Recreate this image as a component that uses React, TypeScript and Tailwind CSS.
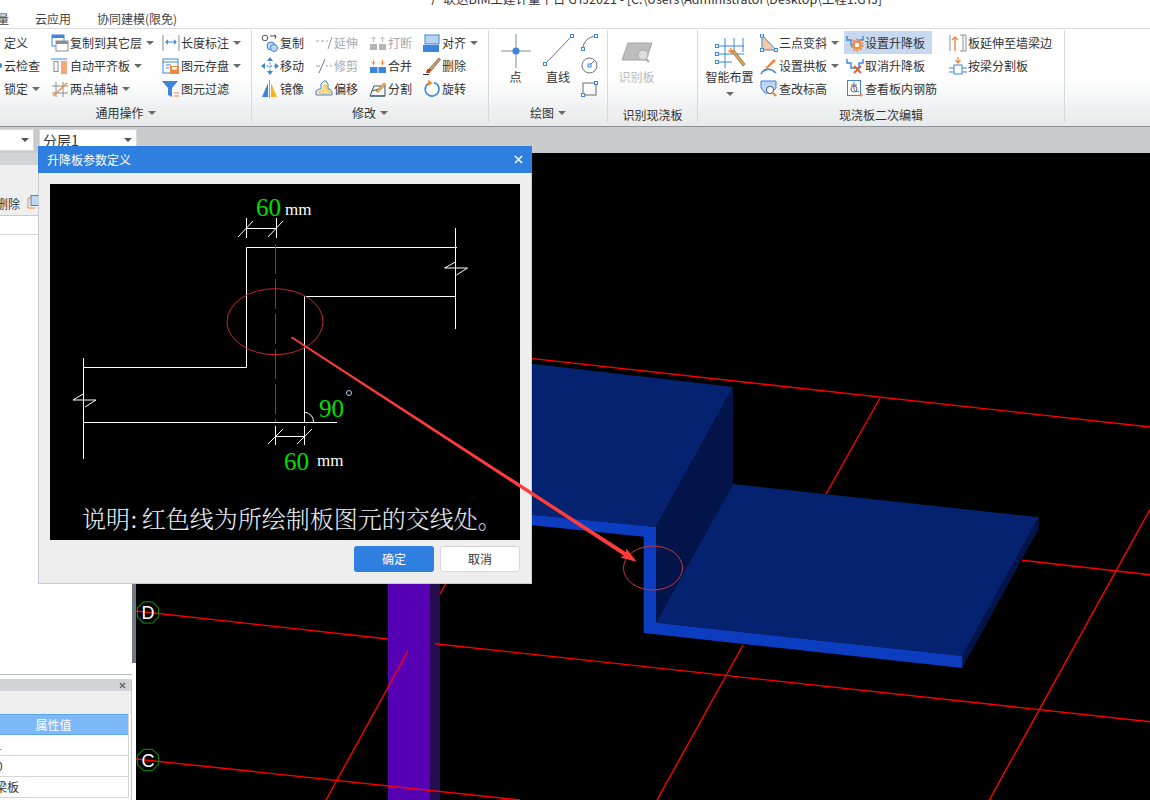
import React from "react";

const UI = "font-['Noto_Sans_CJK_SC','Liberation_Sans',sans-serif]";
const B = "#3d85d8";
const O = "#f0883e";
const G = "#8a8f96";

function Caret() {
  return <span className="ml-[4px] inline-block h-0 w-0 border-x-[4px] border-t-[4px] border-x-transparent border-t-[#6a6a6a]" />;
}

function Ic({ children, w = 18, h = 18, vb }: { children: React.ReactNode; w?: number; h?: number; vb?: string }) {
  return (
    <svg width={w} height={h} viewBox={vb ?? `0 0 ${w} ${h}`} fill="none" className="shrink-0">
      {children}
    </svg>
  );
}

function Item({
  icon,
  label,
  caret,
  off,
  active,
  w,
}: {
  icon?: React.ReactNode;
  label: string;
  caret?: boolean;
  off?: boolean;
  active?: boolean;
  w?: string;
}) {
  return (
    <div
      className={`flex h-[23px] items-center whitespace-nowrap ${off ? "text-[#a9a9a9]" : "text-[#333]"} ${active ? "bg-[#c7d8ef]" : ""} ${w ?? ""}`}
    >
      {icon ? <span className="mr-px flex w-[18px] shrink-0 items-center justify-center">{icon}</span> : null}
      <span>{label}</span>
      {caret ? <Caret /> : null}
    </div>
  );
}

function Group({ w, label, caret, children, tight }: { w: string; label: string; caret?: boolean; children: React.ReactNode; tight?: boolean }) {
  return (
    <div className={`flex h-[92px] shrink-0 flex-col border-r border-[#d6d8da] ${w}`}>
      <div className="flex h-[73px] pt-[1px]">{children}</div>
      <div className={`flex flex-1 items-center justify-center text-[#333] ${tight ? "pt-[4px]" : "pt-[1px]"}`}>
        <span>{label}</span>
        {caret ? <Caret /> : null}
      </div>
    </div>
  );
}

const icons = {
  copyLayer: (
    <Ic>
      <rect x="1" y="1" width="12" height="11" fill="#fff" stroke={B} />
      <rect x="1" y="1" width="12" height="3" fill={B} />
      <rect x="5" y="7" width="12" height="10" fill="#fff" stroke={G} />
      <rect x="5" y="7" width="12" height="3" fill={G} />
    </Ic>
  ),
  autoAlign: (
    <Ic>
      <path d="M0 2h16" stroke={B} />
      <rect x="3" y="4.5" width="4" height="10" stroke={G} />
      <rect x="10" y="4" width="6" height="13" fill="#f7a677" />
    </Ic>
  ),
  twoPoint: (
    <Ic>
      <path d="M5 2v15M12 2v15M1 6h16M1 13h16" stroke={G} />
      <path d="M2 16 16 3" stroke={O} strokeWidth="1.2" />
    </Ic>
  ),
  lenDim: (
    <Ic>
      <path d="M1 1v16M17 1v16" stroke={G} />
      <path d="M4 8h10M6 6 4 8l2 2M12 6l2 2-2 2" stroke={B} strokeWidth="1.2" />
    </Ic>
  ),
  save: (
    <Ic>
      <rect x="1" y="2" width="15" height="14" fill="#fff" stroke={B} />
      <path d="M1 5h15M4 8h5M4 11h3" stroke={B} />
      <rect x="8" y="9" width="9" height="8" fill={O} />
      <rect x="10" y="10" width="5" height="2.5" fill="#fff" />
    </Ic>
  ),
  filter: (
    <Ic>
      <path d="M0 1h16l-6 7v9l-4-2V8z" fill={B} />
      <path d="M12 13h5M12 16h5" stroke={O} />
    </Ic>
  ),
  copy: (
    <Ic>
      <circle cx="4" cy="4" r="2.8" stroke="#555" />
      <path d="M9 2h6l-1 3M13 1l2 1" stroke="#555" />
      <circle cx="10" cy="12" r="4" fill="#bcd8f5" stroke={B} />
      <circle cx="13" cy="14" r="3.5" fill="#bcd8f5" stroke={B} />
    </Ic>
  ),
  extend: (
    <Ic>
      <path d="M1 7h3M6 7h3M11 7h2" stroke="#aaa" />
      <path d="M13 15 17 3" stroke="#999" />
    </Ic>
  ),
  move: (
    <Ic>
      <path d="M9 2v14M2 9h14" stroke={B} strokeDasharray="2 1.5" />
      <path d="m9 0 3 4H6zM9 18l3-4H6zM0 9l4-3v6zM18 9l-4-3v6z" fill={B} />
    </Ic>
  ),
  trim: (
    <Ic>
      <path d="M1 9h4M11 9h2M15 9h2" stroke="#999" />
      <path d="M4 16 10 2" stroke="#777" />
    </Ic>
  ),
  breakI: (
    <Ic>
      <rect x="1" y="10" width="7" height="6" fill="#b5b5b5" />
      <rect x="10" y="10" width="7" height="6" fill="#b5b5b5" />
      <path d="M4.5 8V3M2.5 5l2-2 2 2M13.5 8V3M11.5 5l2-2 2 2" stroke="#b5b5b5" />
    </Ic>
  ),
  merge: (
    <Ic>
      <rect x="1" y="10" width="7.5" height="6" fill={B} />
      <rect x="9.5" y="10" width="7.5" height="6" fill={B} />
      <path d="M4.5 8V3M2.5 5l2 2 2-2M13.5 8V3M11.5 5l2 2 2-2" stroke={O} />
    </Ic>
  ),
  align: (
    <Ic>
      <rect x="2" y="1" width="14" height="9" fill="#b7d2f2" stroke={B} />
      <rect x="0" y="11" width="16" height="7" fill={B} />
    </Ic>
  ),
  del: (
    <Ic>
      <path d="M6 12 16 1l1.5 1.5L8 14z" fill="#c9a067" stroke="#6a4a28" strokeWidth=".7" />
      <path d="M4 12.5c1-1 3-1 4 .5l-1 3H3z" fill="#c2481f" />
      <path d="M0 17.5h6" stroke="#333" />
    </Ic>
  ),
  mirror: (
    <Ic>
      <path d="M7 3v14H1z" fill={B} />
      <path d="M10 3v14h6z" fill="#f6b416" />
      <path d="M8.5 0v18" stroke="#999" />
    </Ic>
  ),
  offset: (
    <Ic>
      <path d="M1 15v-4l3-2h2V4l3-3h2l2 3v5h2l2 3v3z" fill="#fdeec4" stroke={B} />
      <path d="M4 13v-1l2-1h3V5h2v6h3l1 2z" fill="#fff" stroke="#f6b416" />
    </Ic>
  ),
  split: (
    <Ic>
      <path d="M1 16 5 6h11v10z" stroke="#34506f" />
      <path d="M1 16h15M3 11l10-3" stroke="#34506f" />
      <path d="m7 11 8-8 2 1.5-8 8z" fill="#e8b25c" stroke="#7b5a2c" strokeWidth=".5" />
    </Ic>
  ),
  rotate: (
    <Ic>
      <path d="M11 2.4A7 7 0 1 1 5 3.5" stroke={B} strokeWidth="1.6" />
      <path d="M5 0v6l5-3z" fill={O} />
    </Ic>
  ),
  threePt: (
    <Ic>
      <path d="M2 1v15h14z" fill="#f8c7a4" stroke={B} />
      <rect x="0.5" y="0" width="3" height="3" fill="#fff" stroke={B} />
      <rect x="0.5" y="14.5" width="3" height="3" fill="#fff" stroke={B} />
      <rect x="14.5" y="14.5" width="3" height="3" fill="#fff" stroke={B} />
    </Ic>
  ),
  arch: (
    <Ic>
      <path d="M1 17c2-5 9-7 15-1" stroke={B} strokeWidth="1.6" />
      <path d="m5 11 9-9 2 2-9 8z" fill={O} />
    </Ic>
  ),
  elev: (
    <Ic>
      <path d="M1 1h15v7l-5 5H5L1 8z" fill="#bcd8f5" stroke={B} />
      <circle cx="10" cy="10" r="3.6" fill="#fff" stroke="#456" />
      <path d="m13 13 3 3" stroke={O} strokeWidth="2.4" />
    </Ic>
  ),
  setDrop: (
    <Ic>
      <path d="M1 2v4h4v5h8V6h4V2" stroke={B} strokeWidth="1.4" />
      <circle cx="11" cy="11" r="5.6" stroke={O} strokeWidth="1.6" strokeDasharray="2 1.5" />
      <circle cx="11" cy="11" r="3.4" fill="#fff" stroke={O} strokeWidth="2.2" />
    </Ic>
  ),
  cancelDrop: (
    <Ic>
      <path d="M1 2v4h4v5h8V6h4V2" stroke={B} strokeWidth="1.4" />
      <path d="m8 9 7 7M15 9l-7 7" stroke="#e2603b" strokeWidth="2" />
    </Ic>
  ),
  rebar: (
    <Ic>
      <rect x="1.5" y="0.5" width="13" height="15" fill="#fff" stroke={B} />
      <path d="M8 2v7a3 3 0 0 0 5 2M5 5h6" stroke="#667" />
      <circle cx="8" cy="9" r="3" stroke="#667" />
      <path d="m15 13 2 2-2 2-2-2z" fill={O} />
    </Ic>
  ),
  boardExt: (
    <Ic>
      <path d="M11 1h6v16h-6M14 1v16" stroke={G} />
      <path d="M6 17V3M3 6l3-3 3 3" stroke={O} strokeWidth="1.4" />
      <path d="M1 1v16" stroke={G} />
    </Ic>
  ),
  splitBeam: (
    <Ic>
      <path d="M9 0v5M6.5 3 9 6l2.5-3" stroke={O} strokeWidth="1.3" />
      <rect x="5" y="8" width="8" height="9" stroke={B} />
      <path d="M0 11h5M13 11h5M0 15h5M13 15h5" stroke={B} />
    </Ic>
  ),
};

function Sq({ x, y }: { x: number; y: number }) {
  return <rect x={x - 1.5} y={y - 1.5} width="3" height="3" fill="#fff" stroke={B} />;
}

function Ribbon() {
  return (
    <div className="flex h-[98px] items-start overflow-hidden border-t border-[#dcdcdc] bg-linear-to-b from-white via-white via-50% to-[#e7e9ea] pt-[1px]">
      <Group w="w-[252px]" label="通用操作" caret>
        <div className="w-[51px] pl-[4px]">
          <Item label="定义" />
          <div className="flex h-[23px] items-center whitespace-nowrap text-[#333]">
            <span className="-ml-[4px] mr-[2px] h-[5px] w-[2px] rounded-r-full bg-[#3d85d8]" />
            <span>云检查</span>
          </div>
          <Item label="锁定" caret />
        </div>
        <div className="w-[111px]">
          <Item icon={icons.copyLayer} label="复制到其它层" caret />
          <Item icon={icons.autoAlign} label="自动平齐板" caret />
          <Item icon={icons.twoPoint} label="两点辅轴" caret />
        </div>
        <div>
          <Item icon={icons.lenDim} label="长度标注" caret />
          <Item icon={icons.save} label="图元存盘" caret />
          <Item icon={icons.filter} label="图元过滤" />
        </div>
      </Group>
      <Group w="w-[237px]" label="修改" caret>
        <div className="w-[63px] pl-[9px]">
          <Item icon={icons.copy} label="复制" />
          <Item icon={icons.move} label="移动" />
          <Item icon={icons.mirror} label="镜像" />
        </div>
        <div className="w-[54px]">
          <Item icon={icons.extend} label="延伸" off />
          <Item icon={icons.trim} label="修剪" off />
          <Item icon={icons.offset} label="偏移" />
        </div>
        <div className="w-[54px]">
          <Item icon={icons.breakI} label="打断" off />
          <Item icon={icons.merge} label="合并" />
          <Item icon={icons.split} label="分割" />
        </div>
        <div>
          <Item icon={icons.align} label="对齐" caret />
          <Item icon={icons.del} label="删除" />
          <Item icon={icons.rotate} label="旋转" />
        </div>
      </Group>
      <Group w="w-[119px]" label="绘图" caret>
        <div className="flex w-[50px] flex-col items-center pl-[3px] text-[#333]">
          <svg width="32" height="36" viewBox="0 0 32 36" fill="none" className="mt-[1px]">
            <path d="M16 2v34M1 19h30" stroke="#7f8a99" />
            <circle cx="16" cy="19" r="3.6" fill={B} />
          </svg>
          <span className="mt-[3px]">点</span>
        </div>
        <div className="flex w-[38px] flex-col items-center text-[#333]">
          <svg width="32" height="36" viewBox="0 0 32 36" fill="none" className="mt-[1px]">
            <path d="M3 32 30 4" stroke="#66707d" />
            <Sq x={3} y={32} />
            <Sq x={30} y={4} />
          </svg>
          <span className="mt-[3px]">直线</span>
        </div>
        <div className="flex w-[24px] flex-col items-center gap-[6px] pt-[3px]">
          <Ic w={17} h={17}>
            <path d="M2 15C2 8 7 3 15 2" stroke="#66707d" />
            <Sq x={2} y={15} />
            <Sq x={15} y={2} />
          </Ic>
          <Ic w={17} h={17}>
            <circle cx="8.5" cy="8.5" r="7.5" stroke="#66707d" />
            <path d="M8.5 8.5 13 4" stroke="#66707d" />
            <Sq x={8.5} y={8.5} />
          </Ic>
          <Ic w={17} h={17}>
            <rect x="2" y="3" width="13" height="12" stroke="#66707d" />
            <Sq x={15} y={3} />
            <Sq x={2} y={15} />
          </Ic>
        </div>
      </Group>
      <Group w="w-[90px]" label="识别现浇板" tight>
        <div className="flex w-full flex-col items-center pr-[32px] pt-[11px] text-[#bbbbbb]">
          <svg width="32" height="22" viewBox="0 0 32 22" fill="none">
            <path d="M7 1h24l-6 17H1z" fill="#bdbdbd" stroke="#a5a5a5" />
            <circle cx="22" cy="13" r="5" fill="#ddd" stroke="#aaa" />
            <path d="m25 17 3 3" stroke="#aaa" strokeWidth="2" />
          </svg>
          <span className="mt-[7px]">识别板</span>
        </div>
      </Group>
      <Group w="w-[367px]" label="现浇板二次编辑" tight>
        <div className="flex w-[62px] flex-col items-center pl-[1px] pt-[5px] text-[#333]">
          <svg width="32" height="34" viewBox="0 0 32 34" fill="none">
            <path d="M2 10h28M2 18h28M2 26h16M11 2v30M20 2v14M29 2v14" stroke={B} />
            <Sq x={3} y={10} />
            <Sq x={3} y={18} />
            <Sq x={3} y={26} />
            <path d="m18 16 11 14 2-2-11-14z" fill="#d9a35b" stroke="#8a5a2e" strokeWidth=".7" />
            <path d="M16 11l2 3 3 1-3 1-1 3-1-3-3-1 3-1z" fill={O} />
          </svg>
          <span className="mt-[1px]">智能布置</span>
          <span className="mt-[9px] inline-block h-0 w-0 border-x-[4px] border-t-[4px] border-x-transparent border-t-[#6a6a6a]" />
        </div>
        <div className="w-[84px]">
          <Item icon={icons.threePt} label="三点变斜" caret />
          <Item icon={icons.arch} label="设置拱板" caret />
          <Item icon={icons.elev} label="查改标高" />
        </div>
        <div className="w-[105px]">
          <Item icon={icons.setDrop} label="设置升降板" active w="w-[88px] pl-[2px]" />
          <Item icon={icons.cancelDrop} label="取消升降板" w="pl-[2px]" />
          <Item icon={icons.rebar} label="查看板内钢筋" w="pl-[2px]" />
        </div>
        <div>
          <Item icon={icons.boardExt} label="板延伸至墙梁边" />
          <Item icon={icons.splitBeam} label="按梁分割板" />
        </div>
      </Group>
    </div>
  );
}

function Select({ w, text }: { w: string; text?: string }) {
  return (
    <div className={`flex h-[22px] items-center justify-between border border-[#dadada] bg-white pl-[3px] pr-[4px] text-[14px] leading-none text-[#333] ${w}`}>
      <span>{text}</span>
      <span className="inline-block h-0 w-0 border-x-[4px] border-t-[4px] border-x-transparent border-t-[#555]" />
    </div>
  );
}

function LeftPanel() {
  return (
    <div className="flex w-[136px] shrink-0 flex-col bg-white">
      <div className="flex h-[522px] shrink-0">
        <div className="flex w-[132px] flex-col border-b border-[#b9babd]">
          <div className="h-[12px] bg-[#d1d3d7]" />
          <div className="flex h-[51px] items-end border-b border-[#c9cbcf] bg-[#efefef] pb-[5px] text-[#333]">
            <span className="-ml-[4px]">删除</span>
            <svg width="12" height="15" viewBox="0 0 12 15" fill="none" className="ml-[7px]">
              <path d="M4 3H1v10h7" stroke={O} />
              <rect x="4" y="0.5" width="8" height="10" fill="#bcd8f5" stroke={B} />
            </svg>
          </div>
          <div className="h-[19px] border-b border-[#d5d5d5]" />
          <div className="flex-1" />
        </div>
        <div className="flex w-[4px] flex-col">
          <div className="h-[510px] bg-[#6f7883]" />
        </div>
      </div>
      <div className="mt-[4px] flex w-[132px] flex-1 flex-col overflow-hidden border-r border-[#c4c5c8]">
        <div className="flex h-[12px] shrink-0 items-center justify-end bg-[#d2d3d8] pr-[5px] text-[10px] leading-none text-[#666]">
          <svg width="7" height="7" viewBox="0 0 7 7" fill="none">
            <path d="m1 1 5 5M6 1 1 6" stroke="#666" strokeWidth="1.4" />
          </svg>
        </div>
        <div className="h-[23px] shrink-0 bg-[#efefef]" />
        <div className="mr-[2px] flex flex-col border-r border-[#d5d5d5]">
          <div className="flex h-[21px] items-center justify-center border-y border-[#5ea5ee] bg-[#7db9f8] pr-[21px] text-white">
            <span>属性值</span>
          </div>
          <div className="flex h-[21px] items-center border-b border-[#d5d5d5] text-[#1e88e5]">
            <span className="-ml-[5px]">1</span>
          </div>
          <div className="flex h-[21px] items-center border-b border-[#d5d5d5] text-[#333]">
            <span className="-ml-[4px]">0</span>
          </div>
          <div className="flex h-[21px] items-center border-b border-[#d5d5d5] text-[#333]">
            <span className="-ml-[5px]">梁板</span>
          </div>
        </div>
      </div>
    </div>
  );
}

function Octagon({ x, y, t }: { x: number; y: number; t: string }) {
  const pts = Array.from({ length: 8 })
    .map((_, i) => {
      const a = (Math.PI / 4) * i + Math.PI / 8;
      return `${x + 11.5 * Math.cos(a)},${y + 11.5 * Math.sin(a)}`;
    })
    .join(" ");
  return (
    <g>
      <polygon points={pts} stroke="#0a7a0a" strokeWidth="1.2" fill="none" />
      <text x={x} y={y + 6.5} textAnchor="middle" fontSize="18" fill="#fff" fontFamily="Liberation Sans, sans-serif">
        {t}
      </text>
    </g>
  );
}

function Canvas() {
  const R = "#ff0000";
  const line = (x1: number, y1: number, x2: number, y2: number, k: string) => (
    <line key={k} x1={x1} y1={y1} x2={x2} y2={y2} stroke={R} strokeWidth="1.4" />
  );
  return (
    <div className="relative flex-1 bg-black">
      <svg className="absolute inset-0 h-full w-full" viewBox="136 153 1014 647" fill="none">
        <rect x="388" y="584" width="42" height="216" fill="#5600b4" />
        <rect x="430" y="584" width="10" height="216" fill="#260c50" />
        {line(500, 355, 1150, 427, "a")}
        {line(880, 398, 826, 494, "b")}
        {line(743, 645, 657, 800, "c")}
        {line(136, 611, 388, 639, "d1")}
        {line(435, 643.7, 1150, 721.7, "d2")}
        {line(1022, 560.3, 1150, 574.7, "e")}
        {line(1150, 509.3, 989.3, 800, "f")}
        {line(445.7, 584, 440, 594, "g")}
        {line(408, 651, 326, 800, "h")}
        {line(136, 759, 520, 800, "i")}
        <polygon points="500,360 733,387 656,527 500,512" fill="#04226f" />
        <polygon points="733,387 733,484 656,622.7 656,527" fill="#02144a" />
        <polygon points="733,484 1038.7,517.3 962.3,656 656,622.7" fill="#04226f" />
        <polygon points="1038.7,517.3 1038.7,528.7 962.3,668 962.3,656" fill="#02144a" />
        <polygon points="500,511.8 656,527 656,622.7 962.3,656 962.3,668 643.7,633 643.7,536.7 500,521.8" fill="#0c3cbf" />
        <ellipse cx="653" cy="568" rx="29.5" ry="22" stroke="#c8353f" strokeWidth="1" />
        <Octagon x={148} y={612.5} t="D" />
        <Octagon x={148} y={760} t="C" />
      </svg>
    </div>
  );
}

function Diagram() {
  const W = "#ffffff";
  const serif = "Liberation Serif, serif";
  return (
    <svg className="h-[356px] w-[470px] bg-black" viewBox="50 184 470 356" fill="none">
      <g stroke={W} strokeWidth="1">
        <path d="M246.5 218v20M276.5 218v20M246.5 228.5h30M238 237l15-16M268 237l15-16" />
        <path d="M246.5 247.5H457M246.5 247.5V367.5H83.5M455.5 228v101M455.5 262l-11 6h23l-11 7" />
        <path d="M304.5 296.5H455.5M304.5 296.5V422.5M83.5 358v101M83.5 422.5H337M83 394l-10 6h23l-11 7" />
        <path d="M275.5 426v19M304.5 426v19M275.5 436.5h29M268 444l15-15M297 444l15-15M304.5 412q9 2 9 10" />
      </g>
      <path d="M275.5 244V422" stroke="#d01818" strokeDasharray="30 5" />
      <ellipse cx="275" cy="321.7" rx="48" ry="33" stroke="#c02a30" />
      <text x="256" y="216" fontSize="25" fill="#00e000" fontFamily={serif}>60</text>
      <text x="285" y="215" fontSize="17" fill={W} fontWeight="300" fontFamily={serif}>mm</text>
      <text x="319" y="417" fontSize="25" fill="#00e000" fontFamily={serif}>90</text>
      <circle cx="349" cy="393" r="2.5" stroke="#a9d4f5" />
      <text x="284" y="470" fontSize="25" fill="#00e000" fontFamily={serif}>60</text>
      <text x="317" y="466" fontSize="17" fill={W} fontWeight="300" fontFamily={serif}>mm</text>
      <text x="82" y="528" fontSize="24" fill="#e8eef5" fontWeight="300" fontFamily="Noto Serif CJK SC, Noto Sans CJK SC, serif">
        说明:<tspan dx="4">红色线为所绘制板图元的交线处。</tspan>
      </text>
    </svg>
  );
}

function Dialog() {
  return (
    <div className="absolute left-[38px] top-[146px] flex h-[438px] w-[494px] flex-col border border-t-0 border-[#c5cbd8] bg-[#eeeeee]">
      <div className="-mx-px flex h-[27px] shrink-0 items-center justify-between bg-[#2e7fe0] pl-[9px] pr-[9px] text-white">
        <span>升降板参数定义</span>
        <svg width="9" height="9" viewBox="0 0 9 9" fill="none">
          <path d="m1 1 7 7M8 1 1 8" stroke="#fff" strokeWidth="1.5" />
        </svg>
      </div>
      <div className="ml-[11px] mt-[11px] flex">
        <Diagram />
      </div>
      <div className="mr-[11px] mt-[6px] flex justify-end gap-[6px]">
        <div className="flex h-[26px] w-[80px] items-center justify-center rounded-[3px] bg-[#2e7fe0] text-white">确定</div>
        <div className="flex h-[26px] w-[80px] items-center justify-center rounded-[3px] border border-[#d5d5d5] bg-white text-[#333]">取消</div>
      </div>
    </div>
  );
}

export default function App() {
  return (
    <div className={`relative h-[800px] w-[1150px] overflow-hidden bg-white text-[12px] leading-none ${UI}`}>
      <div className="h-[10px] overflow-hidden whitespace-nowrap pl-[431px] text-[12.5px] text-[#333]">
        <div className="-mt-[11px] leading-[20px]">广联达BIM土建计量平台 GTJ2021 - [C:\Users\Administrator\Desktop\工程1.GTJ]</div>
      </div>
      <div className="flex h-[18px] items-center text-[#444]">
        <span className="-ml-[3px] w-[38px]">量</span>
        <span className="w-[62px]">云应用</span>
        <span>协同建模(限免)</span>
      </div>
      <Ribbon />
      <div className="flex h-[27px] gap-[5px] border-t border-[#8f9296] bg-[#c8cacd] pt-[2px]">
        <Select w="w-[35px] -ml-px" />
        <Select w="w-[98px]" text="分层1" />
      </div>
      <div className="flex h-[647px]">
        <LeftPanel />
        <Canvas />
      </div>
      <Dialog />
      <svg className="absolute inset-0 h-[800px] w-[1150px]" viewBox="0 0 1150 800" fill="none">
        <polygon points="291,338 292,336.6 626,552.3 626.3,548.4 636.7,561.7 620.3,557.6 623.9,555.7" fill="#ff3b3b" />
      </svg>
    </div>
  );
}
